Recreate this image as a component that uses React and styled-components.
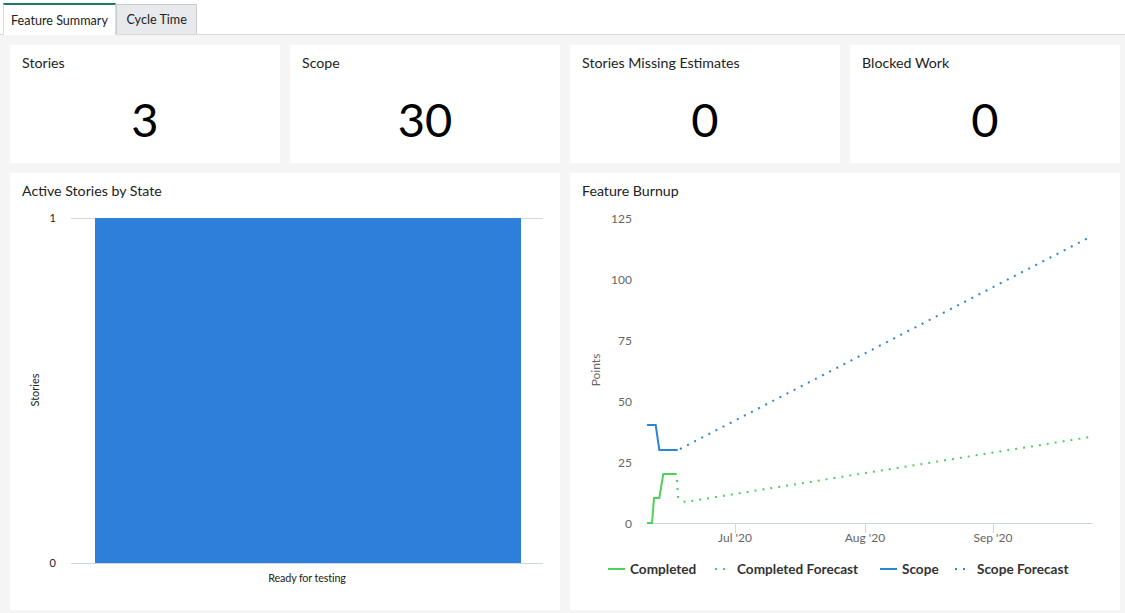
import React from "react";
import styled, { createGlobalStyle } from "styled-components";

const GlobalStyle = createGlobalStyle`
  html, body {
    margin: 0;
    padding: 0;
    background: #f5f5f5;
    font-family: Lato, "Noto Sans", "Liberation Sans", sans-serif;
    color: #222;
  }
`;

const Page = styled.div`
  width: 1125px;
  min-height: 613px;
  background: #f5f5f5;
`;

const TabBar = styled.div`
  display: flex;
  align-items: flex-end;
  height: 35px;
  padding-left: 3px;
  background: #fff;
  border-bottom: 1px solid #d9d9d9;
  box-sizing: border-box;
`;

const Tab = styled.div`
  height: ${(p) => (p.$active ? "32px" : "30px")};
  padding: 0 ${(p) => (p.$active ? "7px" : "9.5px")};
  display: flex;
  align-items: center;
  font-size: 12.6px;
  color: #222;
  box-sizing: border-box;
  background: ${(p) => (p.$active ? "#fff" : "#e8e9ed")};
  border: 1px solid ${(p) => (p.$active ? "#dcdcdc" : "#c9cbd0")};
  border-top: ${(p) => (p.$active ? "2px solid #1d7a67" : "1px solid #c9cbd0")};
  border-bottom: none;
  margin-bottom: ${(p) => (p.$active ? "-1px" : "0")};
`;

const Content = styled.div`
  padding: 10px 5px 0 10px;
  display: flex;
  flex-direction: column;
  gap: 10px;
`;

const StatRow = styled.div`
  display: grid;
  grid-template-columns: repeat(4, 270px);
  gap: 10px;
`;

const ChartRow = styled.div`
  display: grid;
  grid-template-columns: repeat(2, 550px);
  gap: 10px;
`;

const Card = styled.div`
  background: #fff;
  height: ${(p) => p.$h}px;
  display: flex;
  flex-direction: column;
`;

const CardTitle = styled.div`
  padding: 8px 12px 0;
  font-size: 14.2px;
  line-height: 20px;
  color: #222;
`;

const BigNumber = styled.div`
  flex: 1;
  display: flex;
  align-items: center;
  justify-content: center;
  font-size: 47px;
  color: #000;
  padding-top: 2px;
`;

const ChartSvg = styled.svg`
  display: block;
  font-family: Lato, "Noto Sans", "Liberation Sans", sans-serif;
`;

function StatCard({ title, value }) {
  return (
    <Card $h={118}>
      <CardTitle>{title}</CardTitle>
      <BigNumber>{value}</BigNumber>
    </Card>
  );
}

function ActiveStories() {
  return (
    <Card $h={437}>
      <CardTitle>Active Stories by State</CardTitle>
      <ChartSvg width="550" height="409">
        <line x1="61" y1="17.5" x2="533" y2="17.5" stroke="#d6d6d6" />
        <rect x="85" y="17" width="426" height="345" fill="#2e7fd9" />
        <line x1="61" y1="362.5" x2="533" y2="362.5" stroke="#ccd6eb" />
        <text x="46" y="21" fontSize="11" textAnchor="end" fill="#222">1</text>
        <text x="46" y="366" fontSize="11" textAnchor="end" fill="#222">0</text>
        <text
          x="26"
          y="189"
          fontSize="11"
          textAnchor="middle"
          fill="#222"
          transform="rotate(-90 26 189)"
          dominantBaseline="middle"
        >
          Stories
        </text>
        <text x="297" y="381" fontSize="10.8" textAnchor="middle" fill="#222" letterSpacing="-0.15">
          Ready for testing
        </text>
      </ChartSvg>
    </Card>
  );
}

const yTicks = [125, 100, 75, 50, 25, 0];
const yPix = (v) => 322 - v * 2.44;
const months = [
  { x: 165, label: "Jul '20" },
  { x: 295, label: "Aug '20" },
  { x: 423, label: "Sep '20" },
];

const GREEN = "#4fd05a";
const BLUE = "#2d86d2";

function FeatureBurnup() {
  return (
    <Card $h={437}>
      <CardTitle>Feature Burnup</CardTitle>
      <ChartSvg width="550" height="409">
        {yTicks.map((v) => (
          <text key={v} x="62" y={yPix(v) + 4.5} fontSize="12" textAnchor="end" fill="#666">
            {v}
          </text>
        ))}
        <text
          x="27"
          y="169"
          fontSize="12"
          textAnchor="middle"
          fill="#666"
          transform="rotate(-90 27 169)"
          dominantBaseline="middle"
        >
          Points
        </text>
        <line x1="77" y1="322.5" x2="523" y2="322.5" stroke="#ccd6eb" />
        {months.map((m) => (
          <g key={m.label}>
            <line x1={m.x + 0.5} y1="322" x2={m.x + 0.5} y2="332" stroke="#ccd6eb" />
            <text x={m.x} y="341" fontSize="12" textAnchor="middle" fill="#666">
              {m.label}
            </text>
          </g>
        ))}
        {/* scope */}
        <polyline
          points="77,224 85.7,224 89.3,249 107.7,249"
          fill="none"
          stroke={BLUE}
          strokeWidth="2"
        />
        <line
          x1="110"
          y1="248"
          x2="520"
          y2="36"
          stroke={BLUE}
          strokeWidth="2"
          strokeDasharray="2 6"
        />
        {/* completed */}
        <polyline
          points="77,322 82,322 84,297 89.3,297 93.3,273 106.7,273"
          fill="none"
          stroke={GREEN}
          strokeWidth="2"
        />
        <polyline
          points="107,279 108,296 115,301 520,236"
          fill="none"
          stroke={GREEN}
          strokeWidth="2"
          strokeDasharray="2 6"
        />
        {/* legend */}
        <g fontSize="13.6" fontWeight="700" fill="#333">
          <line x1="38" y1="368" x2="55" y2="368" stroke={GREEN} strokeWidth="2" />
          <text x="60" y="373">Completed</text>
          <line x1="145" y1="368" x2="160" y2="368" stroke={GREEN} strokeWidth="2" strokeDasharray="2 6" />
          <text x="167" y="373">Completed Forecast</text>
          <line x1="310" y1="368" x2="327" y2="368" stroke={BLUE} strokeWidth="2" />
          <text x="332" y="373">Scope</text>
          <line x1="385" y1="368" x2="400" y2="368" stroke={BLUE} strokeWidth="2" strokeDasharray="2 6" />
          <text x="407" y="373">Scope Forecast</text>
        </g>
      </ChartSvg>
    </Card>
  );
}

export default function App() {
  return (
    <Page>
      <GlobalStyle />
      <TabBar>
        <Tab $active>Feature Summary</Tab>
        <Tab>Cycle Time</Tab>
      </TabBar>
      <Content>
        <StatRow>
          <StatCard title="Stories" value="3" />
          <StatCard title="Scope" value="30" />
          <StatCard title="Stories Missing Estimates" value="0" />
          <StatCard title="Blocked Work" value="0" />
        </StatRow>
        <ChartRow>
          <ActiveStories />
          <FeatureBurnup />
        </ChartRow>
      </Content>
    </Page>
  );
}
